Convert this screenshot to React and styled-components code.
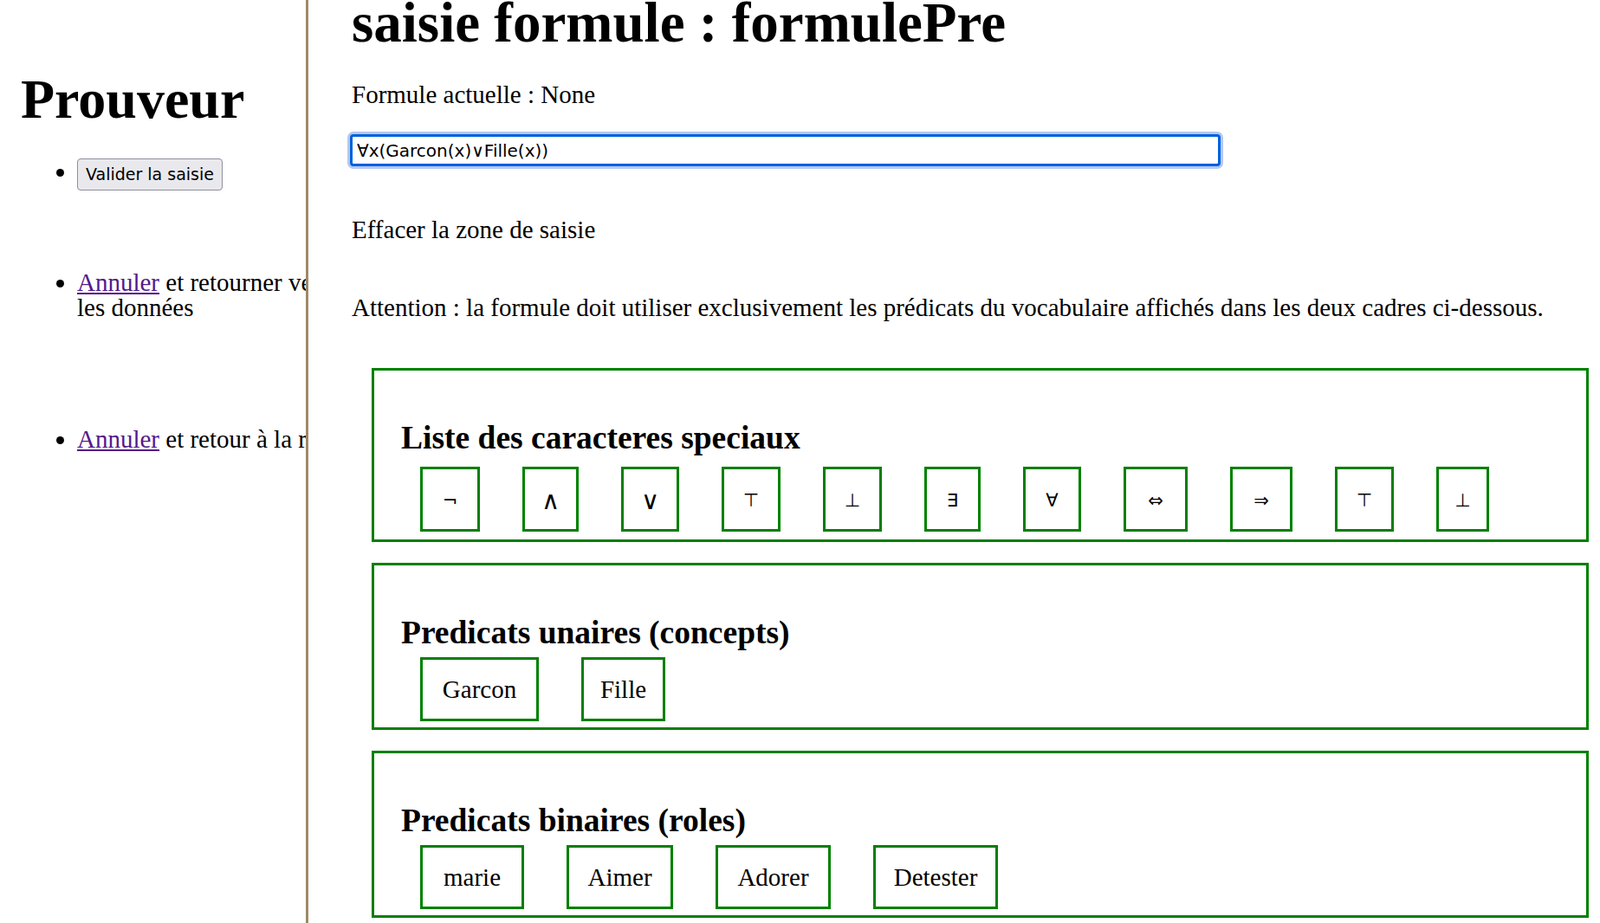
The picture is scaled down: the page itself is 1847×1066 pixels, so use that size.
import React from "react";
import styled, { createGlobalStyle } from "styled-components";

const Global = createGlobalStyle`
  html, body { margin: 0; padding: 0; background: #ffffff; }
  body { font-family: "Liberation Serif", "Times New Roman", serif; color: #000; }
`;

const Page = styled.div`
  display: flex;
  min-height: 100vh;
  align-items: stretch;
`;

const Aside = styled.aside`
  flex: 0 0 356px;
  box-sizing: border-box;
  border-right: 3px solid #9d8a68;
  padding-left: 24px;
  overflow: hidden;
`;

const SideTitle = styled.h1`
  margin: 89px 0 0 0;
  font-size: 64px;
  line-height: 52px;
  font-weight: bold;
`;

const SideList = styled.ul`
  margin: 0;
  padding: 0 0 0 65px;
  width: 310px;
  list-style: disc;
  font-size: 29px;
  line-height: 29px;
`;

const SideItem = styled.li`
  margin-top: ${(p) => p.$top}px;
  white-space: ${(p) => (p.$nowrap ? "nowrap" : "normal")};
`;

const GreyButton = styled.button`
  font-family: "DejaVu Sans", "Liberation Sans", sans-serif;
  font-size: 19px;
  line-height: 23px;
  padding: 6px 9px;
  background: #e9e9ed;
  border: 1px solid #8f8f9d;
  border-radius: 4px;
  color: #000;
  cursor: pointer;
`;

const Link = styled.a`
  color: #551a8b;
  text-decoration: underline;
`;

const Main = styled.main`
  flex: 1 1 auto;
  min-width: 0;
  padding: 0 13px 6px 50px;
`;

const Title = styled.h1`
  margin: 0;
  font-size: 65px;
  line-height: 52px;
  font-weight: bold;
  white-space: nowrap;
`;

const Para = styled.p`
  margin: ${(p) => p.$top}px 0 0 0;
  font-size: 29px;
  line-height: 34px;
  white-space: nowrap;
`;

const FormulaInput = styled.input`
  display: block;
  box-sizing: border-box;
  width: 1005px;
  height: 37px;
  margin: 29px 0 0 -2px;
  padding: 0 5px;
  border: 3px solid #0060df;
  border-radius: 4px;
  box-shadow: 0 0 0 3px #b4c8ee;
  outline: none;
  font-family: "DejaVu Sans", "Liberation Sans", sans-serif;
  font-size: 20px;
  color: #000;
  background: #fff;
`;

const Boxes = styled.div`
  margin: 53px 0 0 23px;
  display: flex;
  flex-direction: column;
  gap: 24px;
`;

const Frame = styled.section`
  border: 3px solid #008000;
  padding: 58px 31px ${(p) => p.$padBottom}px 31px;
`;

const FrameTitle = styled.h3`
  margin: 0;
  font-size: 37.5px;
  line-height: 40px;
  font-weight: bold;
  white-space: nowrap;
`;

const ChipRow = styled.div`
  display: flex;
  gap: 49px;
  margin-top: ${(p) => p.$top}px;
  padding-left: 22px;
`;

const Chip = styled.div`
  box-sizing: border-box;
  width: ${(p) => p.$w}px;
  border: 3px solid #008000;
  background: #fff;
  padding: 18px 0;
  text-align: center;
  font-size: 29px;
  line-height: 32px;
  white-space: nowrap;
  cursor: pointer;
`;

const SymbolChip = styled(Chip)`
  padding: 20px 0 17px 0;
  font-family: "DejaVu Sans", "Liberation Sans", sans-serif;
  font-size: ${(p) => p.$fs || 21}px;
`;

const specials = [
  { s: "¬", w: 69 },
  { s: "∧", w: 65, fs: 29 },
  { s: "∨", w: 67, fs: 29 },
  { s: "⊤", w: 68 },
  { s: "⊥", w: 68 },
  { s: "∃", w: 65 },
  { s: "∀", w: 67 },
  { s: "⇔", w: 74 },
  { s: "⇒", w: 72 },
  { s: "⊤", w: 68 },
  { s: "⊥", w: 61 },
];

const unary = [
  { s: "Garcon", w: 137 },
  { s: "Fille", w: 97 },
];

const binary = [
  { s: "marie", w: 120 },
  { s: "Aimer", w: 123 },
  { s: "Adorer", w: 133 },
  { s: "Detester", w: 144 },
];

export default function App() {
  return (
    <>
      <Global />
      <Page>
        <Aside>
          <SideTitle>Prouveur</SideTitle>
          <SideList>
            <SideItem $top={42}>
              <GreyButton>Valider la saisie</GreyButton>
            </SideItem>
            <SideItem $top={92}>
              <Link href="#">Annuler</Link> et retourner vers les données
            </SideItem>
            <SideItem $top={123} $nowrap>
              <Link href="#">Annuler</Link> et retour à la racine
            </SideItem>
          </SideList>
        </Aside>
        <Main>
          <Title>saisie formule : formulePre</Title>
          <Para $top={40}>Formule actuelle : None</Para>
          <FormulaInput defaultValue="∀x(Garcon(x)∨Fille(x))" />
          <Para $top={56}>Effacer la zone de saisie</Para>
          <Para $top={56}>
            Attention : la formule doit utiliser exclusivement les prédicats du vocabulaire affichés dans les deux cadres ci-dessous.
          </Para>
          <Boxes>
            <Frame $padBottom={9}>
              <FrameTitle>Liste des caracteres speciaux</FrameTitle>
              <ChipRow $top={13}>
                {specials.map((c, i) => (
                  <SymbolChip key={i} $w={c.w} $fs={c.fs}>{c.s}</SymbolChip>
                ))}
              </ChipRow>
            </Frame>
            <Frame $padBottom={7}>
              <FrameTitle>Predicats unaires (concepts)</FrameTitle>
              <ChipRow $top={8}>
                {unary.map((c) => (
                  <Chip key={c.s} $w={c.w}>{c.s}</Chip>
                ))}
              </ChipRow>
            </Frame>
            <Frame $padBottom={7}>
              <FrameTitle>Predicats binaires (roles)</FrameTitle>
              <ChipRow $top={8}>
                {binary.map((c) => (
                  <Chip key={c.s} $w={c.w}>{c.s}</Chip>
                ))}
              </ChipRow>
            </Frame>
          </Boxes>
        </Main>
      </Page>
    </>
  );
}
